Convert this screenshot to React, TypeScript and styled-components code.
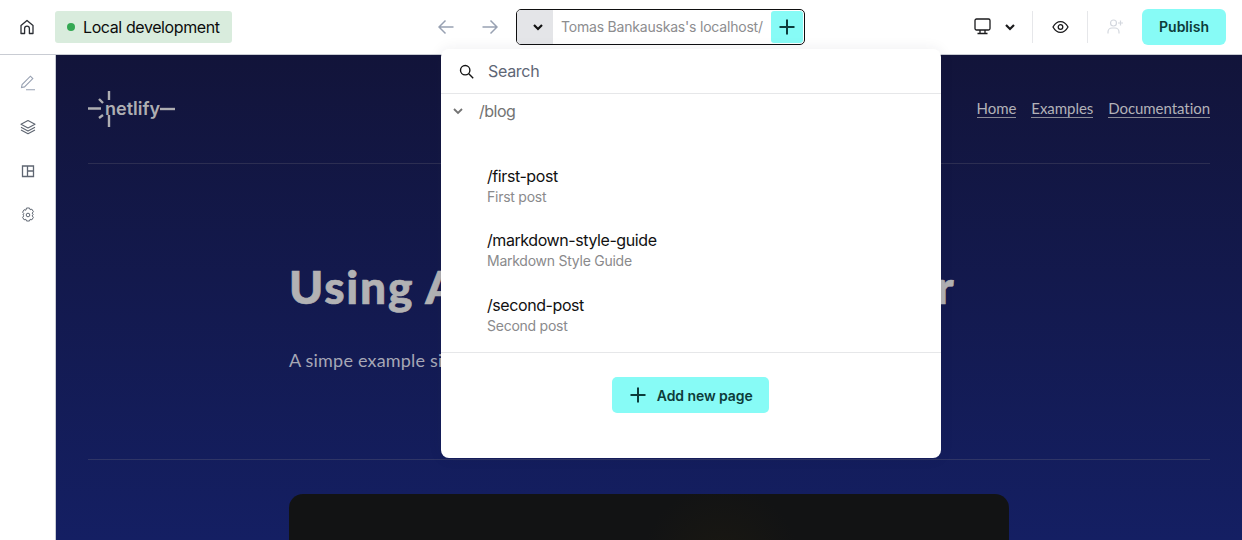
import React from 'react';
import styled, { createGlobalStyle } from 'styled-components';

const GlobalStyle = createGlobalStyle`
  html, body {
    margin: 0;
    padding: 0;
    height: 540px;
    overflow: hidden;
    background: #fff;
    font-family: 'Inter', 'Liberation Sans', sans-serif;
  }
  * { box-sizing: border-box; }
`;

const Page = styled.div`
  position: relative;
  width: 1242px;
  height: 540px;
  overflow: hidden;
`;

const TopBar = styled.header`
  display: grid;
  grid-template-columns: 424px auto 1fr;
  align-items: center;
  height: 55px;
  padding-bottom: 1px;
  border-bottom: 1px solid #c9ccd3;
  background: #fff;
`;

const BarLeft = styled.div`
  display: flex;
  align-items: center;
  gap: 20px;
  padding-left: 19px;
`;

const BarCenter = styled.div`
  display: flex;
  align-items: center;
`;

const BarRight = styled.div`
  display: flex;
  align-items: center;
  justify-content: flex-end;
  padding-right: 16px;
`;

const StatusBadge = styled.div`
  display: flex;
  align-items: center;
  gap: 8px;
  height: 32px;
  padding: 0 12px;
  border-radius: 3px;
  background: #d9ecdd;
  color: #0c0c0c;
  font-size: 16px;
  letter-spacing: -0.4px;
`;

const StatusDot = styled.span`
  width: 8px;
  height: 8px;
  border-radius: 50%;
  background: #34a853;
`;

const ArrowSlot = styled.span`
  display: flex;
  width: 44px;
  justify-content: center;
  color: #98a1b2;
`;

const ArrowGroup = styled.div`
  display: flex;
  margin-right: 4px;
`;

const AddressBox = styled.div`
  display: flex;
  align-items: stretch;
  width: 289px;
  height: 36px;
  border: 1px solid #0f0f10;
  border-radius: 5px;
  overflow: hidden;
  background: #fff;
`;

const AddressToggle = styled.div`
  display: flex;
  align-items: center;
  justify-content: center;
  width: 36px;
  padding-left: 6px;
  background: #e4e5e8;
  color: #111;
`;

const AddressText = styled.div`
  flex: 1;
  display: flex;
  align-items: center;
  padding-left: 8px;
  color: #8d8d8f;
  font-size: 14px;
  letter-spacing: -0.2px;
  white-space: nowrap;
`;

const AddressAdd = styled.div`
  display: flex;
  align-items: center;
  justify-content: center;
  width: 32px;
  margin: 1px;
  border-radius: 3px;
  background: #87fbf6;
  color: #0d3b3a;
`;

const DeviceGroup = styled.div`
  display: flex;
  align-items: center;
  gap: 12px;
  padding-right: 15px;
  color: #1a1a1c;
`;

const EyeSlot = styled.div`
  display: flex;
  align-items: center;
  justify-content: center;
  width: 56px;
  height: 32px;
  border-left: 1px solid #e6e7ea;
  border-right: 1px solid #e6e7ea;
  color: #1a1a1c;
`;

const InviteSlot = styled.div`
  display: flex;
  width: 54px;
  justify-content: center;
  color: #d3d7de;
`;

const PublishButton = styled.button`
  width: 84px;
  height: 36px;
  border: 0;
  border-radius: 6px;
  background: #87fbf6;
  color: #0d3b3a;
  font-family: inherit;
  font-size: 14px;
  font-weight: 600;
`;

const Body = styled.div`
  display: flex;
  height: 485px;
`;

const SideBar = styled.aside`
  display: flex;
  flex-direction: column;
  align-items: center;
  gap: 22px;
  width: 56px;
  padding-top: 17px;
  border-right: 1px solid #c9ccd3;
`;

const SideIcon = styled.span<{ $muted?: boolean }>`
  display: flex;
  width: 22px;
  height: 22px;
  align-items: center;
  justify-content: center;
  color: ${(p) => (p.$muted ? '#98a1b2' : '#5f6672')};
`;

const Preview = styled.main`
  flex: 1;
  padding: 0 32px;
  overflow: hidden;
  background: linear-gradient(180deg, #12143a 0%, #141f63 100%);
  font-family: 'Lato', 'Liberation Sans', sans-serif;
`;

const SiteHeader = styled.div`
  display: flex;
  align-items: center;
  justify-content: space-between;
  height: 109px;
  border-bottom: 1px solid #2c2e52;
`;

const Logo = styled.div`
  display: flex;
  align-items: center;
  height: 36px;
  color: #aeaeb2;
  font-family: 'Inter', 'Liberation Sans', sans-serif;
  font-size: 18px;
  font-weight: 600;
`;

const LogoText = styled.span`
  margin-left: -9px;
  margin-top: -2px;
`;

const NavLinks = styled.nav`
  display: flex;
  gap: 15px;
`;

const NavLink = styled.a`
  padding-bottom: 0;
  border-bottom: 1px solid #8a8a96;
  color: #b2b2b8;
  font-size: 15px;
  line-height: 17px;
  letter-spacing: -0.05px;
`;

const Hero = styled.section`
  width: 720px;
  height: 295px;
  margin: 0 auto;
`;

const HeroRule = styled.div`
  height: 1px;
  background: #2f3566;
`;

const Title = styled.h1`
  margin: 0;
  padding-top: 93px;
  color: #b2b2b4;
  font-size: 46px;
  line-height: 60px;
  font-weight: 900;
  letter-spacing: 1.8px;
  -webkit-text-stroke: 0.7px #b2b2b4;
  white-space: nowrap;
`;

const Subtitle = styled.p`
  margin: 30px 0 0;
  color: #a6a7b6;
  font-size: 18px;
  line-height: 26px;
  letter-spacing: 0.2px;
`;

const HeroImage = styled.div`
  width: 720px;
  height: 120px;
  margin: 34px auto 0;
  border-radius: 14px 14px 0 0;
  background: radial-gradient(circle at 60% 70px, #1a1812 0%, #121314 18%);
`;

const Popover = styled.div`
  position: absolute;
  left: 441px;
  top: 49px;
  display: flex;
  flex-direction: column;
  width: 500px;
  height: 409px;
  border-radius: 8px;
  background: #fff;
  box-shadow: 0 0 14px rgba(40, 40, 60, 0.08);
`;

const SearchRow = styled.div`
  display: flex;
  align-items: center;
  gap: 14px;
  height: 45px;
  padding-left: 18px;
  border-bottom: 1px solid #e6e7e9;
  color: #5e6675;
  font-size: 16px;
  letter-spacing: -0.3px;
`;

const SearchIcon = styled.span`
  display: flex;
  color: #141414;
`;

const FolderRow = styled.div`
  display: flex;
  align-items: center;
  gap: 14px;
  height: 34px;
  padding-left: 10px;
  color: #737373;
  font-size: 16px;
  letter-spacing: -0.5px;
`;

const PageList = styled.ul`
  flex: 1;
  display: flex;
  flex-direction: column;
  gap: 22.4px;
  margin: 0;
  padding: 37px 0 0 46px;
  list-style: none;
`;

const PageItem = styled.li`
  display: flex;
  flex-direction: column;
`;

const PagePath = styled.span`
  color: #111;
  font-size: 16px;
  line-height: 22px;
  letter-spacing: -0.42px;
`;

const PageName = styled.span`
  color: #8a8a8c;
  font-size: 14px;
  line-height: 20px;
  letter-spacing: -0.25px;
`;

const PopoverFooter = styled.div`
  display: flex;
  justify-content: center;
  height: 106px;
  padding: 24px 2px 0 0;
  border-top: 1px solid #e6e7e9;
`;

const AddPageButton = styled.button`
  display: flex;
  align-items: center;
  justify-content: center;
  gap: 9.5px;
  width: 157px;
  height: 36px;
  padding: 0 0 0 2px;
  border: 0;
  border-radius: 5px;
  background: #87fbf6;
  color: #0d3b3a;
  font-family: inherit;
  font-size: 14px;
  font-weight: 600;
  letter-spacing: -0.08px;
`;

const Chevron = ({ size = 14, width = 2.2 }: { size?: number; width?: number }) => (
  <svg width={size} height={size} viewBox="0 0 14 14" fill="none" stroke="currentColor" strokeWidth={width}>
    <path d="M3 5l4 4 4-4" />
  </svg>
);

const Plus = ({ weight = 2 }: { weight?: number }) => (
  <svg width="18" height="18" viewBox="0 0 18 18" fill="none" stroke="currentColor" strokeWidth={weight}>
    <path d="M9 1.500v15M1.500 9h15" />
  </svg>
);

const Arrow = ({ flip }: { flip?: boolean }) => (
  <svg width="16" height="16" viewBox="0 0 16 16" fill="none" stroke="currentColor" strokeWidth="1.5" style={flip ? { transform: 'scaleX(-1)' } : undefined}>
    <path d="M15.500 8H1M7.500 1.500L1 8l6.500 6.500" />
  </svg>
);

const Home = () => (
  <svg width="16" height="16" viewBox="0 0 16 16" fill="none" stroke="#2a2d33" strokeWidth="1.3">
    <path d="M2 14.500V6.400L8 1.500l6 4.900v8.100h-3.600V9.600a2.400 2.400 0 0 0-4.800 0v4.900z" strokeLinejoin="round" />
  </svg>
);

const Pencil = () => (
  <svg width="16" height="16" viewBox="0 0 16 16" fill="none" stroke="currentColor" strokeWidth="1.1">
    <path d="M1.500 12.500l.6-3L10.400 1.200l2.400 2.400-8.300 8.300zM6 14.800h9" />
  </svg>
);

const Layers = () => (
  <svg width="16" height="16" viewBox="0 0 16 16" fill="none" stroke="currentColor" strokeWidth="1.1" strokeLinejoin="round">
    <path d="M8 1.500L15 5.200 8 8.900 1 5.200zM1 8.200l7 3.700 7-3.700M1 11l7 3.700 7-3.700" />
  </svg>
);

const Panels = () => (
  <svg width="14" height="14" viewBox="0 0 14 14" fill="none" stroke="currentColor" strokeWidth="1.3">
    <path d="M1.500 2h11v10.500h-11zM6.500 2v10.500M6.500 7h6" />
  </svg>
);

const Gear = () => (
  <svg width="16" height="16" viewBox="0 0 16 16" fill="none" stroke="currentColor" strokeWidth="1" strokeLinejoin="round">
    <path d="M6.500 1h3l.6 1.700 1.800-.5 1.500 2.500-1.200 1.400.9 1.400-.9 1.400 1.200 1.400-1.500 2.500-1.800-.5-.6 1.700h-3l-.6-1.700-1.800.5-1.500-2.500 1.200-1.400L2.900 8l.9-1.400-1.200-1.400 1.500-2.500 1.800.5z" />
    <circle cx="8" cy="8" r="1.800" />
  </svg>
);

const Monitor = () => (
  <svg width="17" height="17" viewBox="0 0 17 17" fill="none" stroke="currentColor" strokeWidth="1.3">
    <rect x="1" y="1" width="15" height="11" rx="1.500" />
    <path d="M6 12v3.500M11 12v3.500M3.500 15.500h10" />
  </svg>
);

const Eye = () => (
  <svg width="17" height="14" viewBox="0 0 17 14" fill="none" stroke="currentColor" strokeWidth="1.3">
    <path d="M1 7c2-3.600 4.500-5.400 7.500-5.400S14 3.400 16 7c-2 3.600-4.500 5.400-7.500 5.400S3 10.600 1 7z" />
    <circle cx="8.500" cy="7" r="2.300" />
  </svg>
);

const Invite = () => (
  <svg width="17" height="17" viewBox="0 0 17 17" fill="none" stroke="currentColor" strokeWidth="1.2">
    <circle cx="6.500" cy="5" r="3" />
    <path d="M1 15.500v-1.500a4 4 0 0 1 4-4h3a4 4 0 0 1 4 4v1.500M13.500 2.500v5M11 5h5" />
  </svg>
);

const Search = () => (
  <svg width="15" height="15" viewBox="0 0 15 15" fill="none" stroke="currentColor" strokeWidth="1.4">
    <circle cx="6.200" cy="6.200" r="4.700" />
    <path d="M9.800 9.800l4.400 4.400" />
  </svg>
);

const LogoRays = styled.svg`
  display: block;
  flex: none;
`;

// rays of the logo: the vertical ones run above and below the wordmark
const LogoMark = () => (
  <LogoRays width="26" height="36" viewBox="0 0 26 36" fill="none" stroke="#aeaeb2" strokeWidth="2.4">
    <path d="M0 17.500h13M21 0v9M21 24v12M11 8l4 4M11 27l4-3" />
  </LogoRays>
);

const LogoTail = () => (
  <svg width="15" height="4" viewBox="0 0 15 4" fill="none" stroke="#aeaeb2" strokeWidth="2.4">
    <path d="M0 2h15" />
  </svg>
);

const pages = [
  { path: '/first-post', name: 'First post' },
  { path: '/markdown-style-guide', name: 'Markdown Style Guide' },
  { path: '/second-post', name: 'Second post' },
];

const App: React.FC = () => (
  <Page>
    <GlobalStyle />
    <TopBar>
      <BarLeft>
        <Home />
        <StatusBadge>
          <StatusDot />
          Local development
        </StatusBadge>
      </BarLeft>
      <BarCenter>
        <ArrowGroup>
          <ArrowSlot><Arrow /></ArrowSlot>
          <ArrowSlot><Arrow flip /></ArrowSlot>
        </ArrowGroup>
        <AddressBox>
          <AddressToggle><Chevron /></AddressToggle>
          <AddressText>Tomas Bankauskas's localhost/</AddressText>
          <AddressAdd><Plus /></AddressAdd>
        </AddressBox>
      </BarCenter>
      <BarRight>
        <DeviceGroup>
          <Monitor />
          <Chevron />
        </DeviceGroup>
        <EyeSlot><Eye /></EyeSlot>
        <InviteSlot><Invite /></InviteSlot>
        <PublishButton>Publish</PublishButton>
      </BarRight>
    </TopBar>
    <Body>
      <SideBar>
        <SideIcon $muted><Pencil /></SideIcon>
        <SideIcon><Layers /></SideIcon>
        <SideIcon><Panels /></SideIcon>
        <SideIcon><Gear /></SideIcon>
      </SideBar>
      <Preview>
        <SiteHeader>
          <Logo>
            <LogoMark />
            <LogoText>netlify</LogoText>
            <LogoTail />
          </Logo>
          <NavLinks>
            <NavLink>Home</NavLink>
            <NavLink>Examples</NavLink>
            <NavLink>Documentation</NavLink>
          </NavLinks>
        </SiteHeader>
        <Hero>
          <Title>Using Astro with Visual Editor</Title>
          <Subtitle>A simpe example site</Subtitle>
        </Hero>
        <HeroRule />
        <HeroImage />
      </Preview>
    </Body>
    <Popover>
      <SearchRow>
        <SearchIcon><Search /></SearchIcon>
        Search
      </SearchRow>
      <FolderRow>
        <Chevron size={14} width={1.8} />
        /blog
      </FolderRow>
      <PageList>
        {pages.map((page) => (
          <PageItem key={page.path}>
            <PagePath>{page.path}</PagePath>
            <PageName>{page.name}</PageName>
          </PageItem>
        ))}
      </PageList>
      <PopoverFooter>
        <AddPageButton>
          <Plus />
          Add new page
        </AddPageButton>
      </PopoverFooter>
    </Popover>
  </Page>
);

export default App;
